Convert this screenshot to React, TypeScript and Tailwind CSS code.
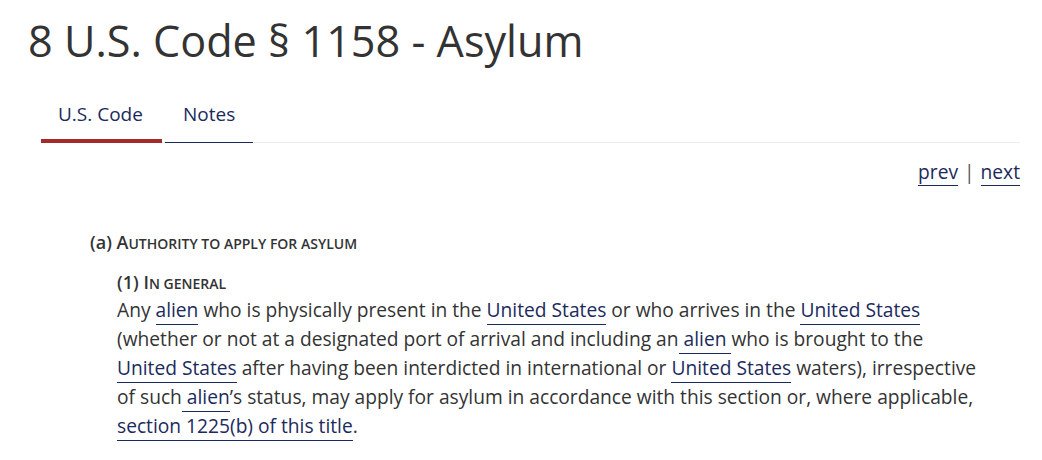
const link = 'text-[#1b2a5c] no-underline whitespace-nowrap border-b border-[#1b2a5c] pb-[1px]'

function A({ children }: { children: React.ReactNode }) {
  return <a href="#" className={link}>{children}</a>
}

export default function App() {
  return (
    <div className="bg-white font-['Open_Sans',sans-serif] text-[#333] w-[1042px] h-[460px] overflow-hidden">
      <div className="pl-[28px] pr-[22px] pt-[13px]">
        <h1 className="text-[43.2px] leading-[56px] font-normal text-[#333]">8 U.S. Code § 1158 - Asylum</h1>

        <div className="mt-[27px] ml-[13px] flex border-b border-[#ececec]">
          <div className="px-[17px] pt-[7px] pb-[14px] text-[19px] leading-[22px] text-[#1b2a5c] border-b-4 border-[#a52a2a] -mb-[1px] w-[121px]">
            U.S. Code
          </div>
          <div className="ml-[3px] px-[18px] pt-[7px] pb-[16px] text-[19px] leading-[22px] text-[#1b2a5c] border-b border-[#1b2a5c] -mb-[1px]">
            Notes
          </div>
        </div>

        <div className="mt-[17px] flex justify-end text-[19.2px] leading-[24px] text-[#555]">
          <A>prev</A>
          <span className="mx-[6px]">|</span>
          <A>next</A>
        </div>

        <div className="mt-[44px] pl-[62px]">
          <h3 className="text-[18px] leading-[24px] font-semibold text-[#333]">
            (a) A<span className="text-[14px] uppercase">uthority to apply for asylum</span>
          </h3>
          <div className="pl-[27px] mt-[14px]">
            <h4 className="text-[18px] leading-[24px] font-semibold text-[#333]">
              (1) I<span className="text-[14px] uppercase">n general</span>
            </h4>
            <p className="-mt-[1px] text-[19.2px] leading-[29px] text-[#333] w-[870px]">
              Any <A>alien</A> who is physically present in the <A>United States</A> or who arrives in the <A>United States</A> (whether or not at a designated port of arrival and including an<A> alien </A>who is brought to the <A>United States</A> after having been interdicted in international or <A>United States</A> waters), irrespective of such<A> alien</A>’s status, may apply for asylum in accordance with this section or, where applicable, <A>section 1225(b) of this title</A>.
            </p>
          </div>
        </div>
      </div>
    </div>
  )
}
